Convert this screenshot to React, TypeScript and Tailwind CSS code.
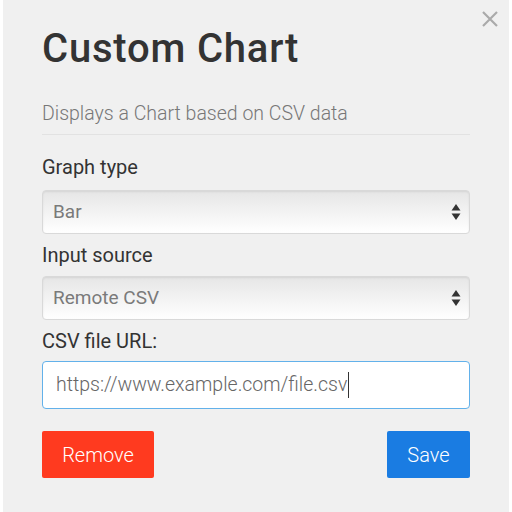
import React from "react";

function Arrows() {
  return (
    <svg width="10" height="18" viewBox="0 0 10 18" className="text-[#333]">
      <path d="M5 1L9.5 7.5H0.5z" fill="currentColor" />
      <path d="M5 17L9.5 10.5H0.5z" fill="currentColor" />
    </svg>
  );
}

function FakeSelect({ value }: { value: string }) {
  return (
    <div className="flex h-[44px] items-center justify-between rounded-[4px] border border-[#d9d9d9] bg-gradient-to-b from-[#e6e6e6] to-[#ffffff] pl-[10px] pr-[8px] shadow-[inset_0_1px_2px_rgba(0,0,0,0.08)]">
      <span className="text-[19px] text-[#7a7a7a]">{value}</span>
      <Arrows />
    </div>
  );
}

export default function App() {
  return (
    <div className="min-h-screen bg-white px-[3px] font-['Roboto',sans-serif]">
      <div className="relative min-h-[512px] bg-[#f0f0f0] px-[39px] pt-[22px]">
        <button className="absolute right-[10px] top-[10px] text-[#aaa]" aria-label="Close">
          <svg width="18" height="18" viewBox="0 0 18 18" stroke="currentColor" strokeWidth="2.2">
            <path d="M2 2l14 14M16 2L2 16" />
          </svg>
        </button>

        <h1 className="text-[40px] font-medium leading-[54px] tracking-[0.8px] text-[#333]">Custom Chart</h1>
        <p className="mt-[25px] text-[19.5px] font-light leading-[26px] text-[#777]">
          Displays a Chart based on CSV data
        </p>
        <div className="mt-[7px] h-px bg-[#e2e2e2]" />

        <label className="mt-[19px] block text-[20px] leading-[26px] text-[#333]">Graph type</label>
        <div className="mt-[10px]">
          <FakeSelect value="Bar" />
        </div>

        <label className="mt-[8px] block text-[20px] leading-[26px] text-[#333]">Input source</label>
        <div className="mt-[8px]">
          <FakeSelect value="Remote CSV" />
        </div>

        <label className="mt-[8px] block text-[20px] leading-[26px] text-[#333]">CSV file URL:</label>
        <div className="mt-[7px] flex h-[48px] items-center rounded-[4px] border border-[#62b1ea] bg-white pl-[13px]">
          <span className="text-[19.5px] font-light text-[#666]">https://www.example.com/file.csv</span>
          <span className="ml-px h-[26px] w-px bg-[#333]" />
        </div>

        <div className="mt-[22px] flex justify-between">
          <button className="h-[47px] w-[112px] rounded-[2px] bg-[#ff3a1f] text-[20px] font-light text-white">Remove</button>
          <button className="h-[47px] w-[83px] rounded-[2px] bg-[#1a7ce2] text-[20px] font-light text-white">Save</button>
        </div>
      </div>
    </div>
  );
}
